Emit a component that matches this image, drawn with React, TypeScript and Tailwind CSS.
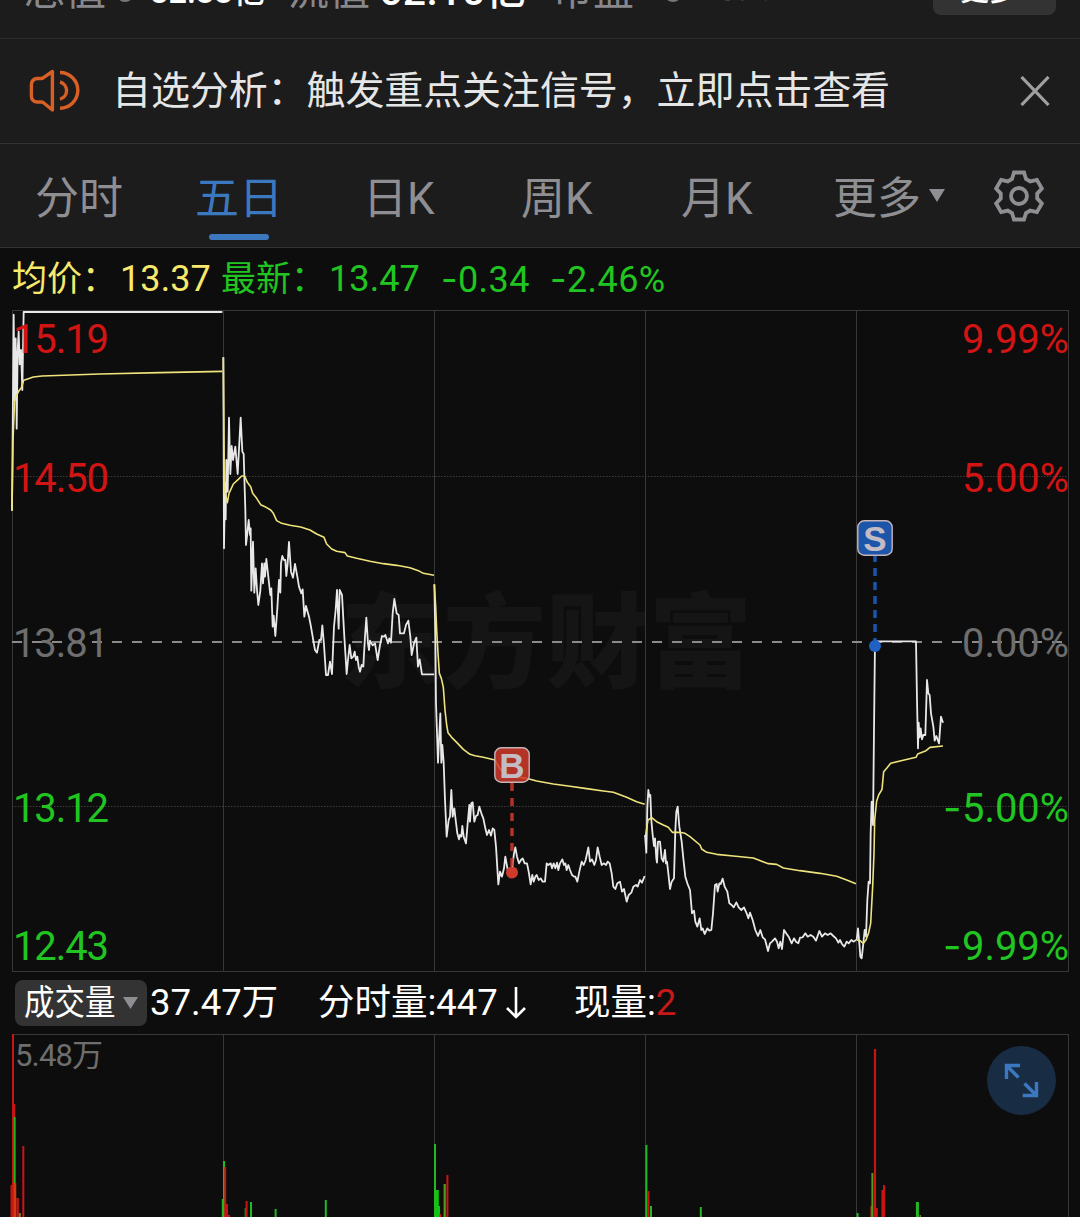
import clsx from 'clsx';

const tabs = [
  { label: '分时', width: 'w-[160px]' },
  { label: '五日', width: 'w-[168px]', active: true },
  { label: '日K', width: 'w-[158px]' },
  { label: '周K', width: 'w-[160px]' },
  { label: '月K', width: 'w-[152px]' },
];

const gridX = [12.5, 223.5, 434.5, 645.5, 856.5, 1068.5];

const axis = [
  { y: 353, price: '15.19', sign: '', pct: '9.99%', color: '#d21414' },
  { y: 492, price: '14.50', sign: '', pct: '5.00%', color: '#d21414' },
  { y: 657, price: '13.81', sign: '', pct: '0.00%', color: '#6e6e6e' },
  { y: 822, price: '13.12', sign: '-', pct: '5.00%', color: '#21c521' },
  { y: 960, price: '12.43', sign: '-', pct: '9.99%', color: '#21c521' },
];

// One entry per trading day, points are thirds of a pixel from the day's origin
const days = [
  {
    origin: 'translate(0 300) scale(0.33333)',
    price:
      '36,632 41,44 44,300 47,115 50,386 53,150 56,95 59,193 63,150 67,270 71,36 667,36',
    avg: '36,632 39,420 44,300 52,282 57,272 64,263 71,241 85,236 100,231 126,228 300,222 480,218 667,214',
  },
  {
    origin: 'translate(210 350) scale(0.33333)',
    price:
      '40,22 42,595 45,400 47,508 49,330 53,425 57,203 61,372 65,288 69,330 76,290 83,372 92,203 97,305 101,312 106,480 108,585 112,550 116,510 120,555 122,535 124,722 129,575 133,728 137,655 141,720 145,765 151,722 156,640 159,700 163,640 165,680 169,627 176,690 181,735 184,715 188,830 191,797 196,858 202,775 207,690 211,728 213,640 217,618 222,630 226,630 229,678 233,640 237,576 243,665 249,683 255,642 262,680 267,710 274,730 278,718 283,800 288,768 297,800 302,825 308,860 315,900 321,908 328,870 333,870 337,826 342,885 348,975 354,975 360,935 366,972 372,830 377,780 381,720 386,836 389,720 396,735 403,860 410,972 414,930 419,885 424,925 430,920 434,905 438,930 442,920 446,950 450,965 455,945 460,950 465,860 469,803 474,880 477,900 480,872 488,886 495,880 503,930 510,885 516,858 522,860 526,855 534,880 538,865 543,878 548,790 553,747 560,790 566,795 570,850 582,850 588,825 595,812 601,860 605,915 612,880 619,863 624,950 629,928 636,973 672,973',
    avg: '40,22 43,420 52,458 57,430 70,402 85,388 95,378 104,378 112,397 122,410 128,430 140,445 152,464 165,470 182,480 190,490 200,512 215,520 240,526 272,531 300,540 320,552 342,562 350,582 365,597 380,604 405,608 412,618 440,625 480,634 520,641 560,646 600,653 625,662 640,670 672,676',
  },
  {
    origin: 'translate(420 570) scale(0.33333)',
    price:
      '43,43 46,200 48,400 54,578 58,490 61,430 64,578 67,525 71,578 75,690 80,800 86,750 90,740 94,660 98,740 103,715 107,750 112,790 117,808 120,795 124,800 127,768 131,800 138,820 143,760 148,705 150,755 154,700 158,697 163,755 168,738 173,735 178,710 184,730 190,745 196,775 201,795 207,780 213,797 218,775 223,780 228,830 235,943 240,905 246,920 252,895 256,860 264,905 275,907 282,850 286,832 291,860 297,880 303,870 308,865 314,880 321,880 326,905 332,943 337,915 341,935 346,920 350,915 356,930 362,925 368,935 375,935 380,880 385,885 392,880 396,895 401,880 406,895 411,878 415,900 420,880 427,868 432,885 436,880 440,900 445,885 450,900 456,915 462,920 466,920 472,935 478,905 485,875 491,885 497,870 505,832 510,875 516,868 523,885 528,870 533,832 539,860 545,885 552,880 558,885 563,875 569,880 575,910 580,950 586,957 592,940 600,935 606,965 612,957 620,995 626,975 634,968 640,950 648,945 653,950 660,930 666,938 674,918',
    avg: '43,43 47,110 50,180 54,250 58,310 64,325 70,352 75,420 80,465 84,488 95,502 110,517 130,538 150,553 165,557 190,562 225,570 240,597 260,612 290,620 325,626 350,633 400,642 450,649 500,656 550,663 580,667 620,682 650,695 674,703',
  },
  {
    origin: 'translate(640 770) scale(0.33333)',
    price:
      '15,195 19,248 22,110 25,60 28,80 31,75 34,150 38,195 42,228 45,205 49,265 51,278 54,215 60,215 65,265 70,275 75,240 78,280 81,275 85,310 90,357 95,335 102,325 106,180 109,125 113,110 118,170 125,215 130,265 136,320 142,340 150,360 156,430 162,422 166,455 172,470 179,445 184,480 188,475 194,492 202,475 208,482 214,480 219,430 225,345 230,342 233,365 238,340 242,342 248,326 254,350 262,365 268,400 275,405 281,412 289,397 296,412 304,420 312,412 320,430 325,445 330,428 338,450 346,480 354,498 361,480 368,502 375,508 384,543 390,520 396,515 405,505 411,515 416,535 421,515 426,537 432,480 440,492 447,502 455,520 462,505 468,515 475,520 480,503 488,502 496,490 503,500 512,495 520,500 528,512 538,483 546,500 555,490 563,495 572,490 580,498 588,505 595,518 600,510 606,522 613,530 620,515 626,520 634,510 640,515 648,510',
    avg: '17,195 24,150 35,143 50,155 70,165 85,172 97,187 120,187 135,190 150,200 180,225 185,237 200,247 230,253 280,258 340,264 385,281 410,283 430,294 480,302 540,310 590,319 620,330 648,341',
  },
  {
    origin: 'translate(840 500) scale(0.33333)',
    price:
      '50,1320 54,1285 58,1330 61,1370 65,1375 70,1330 74,1290 78,1310 82,1200 86,1145 90,1150 92,1000 95,905 99,975 102,690 105,424 228,424 231,600 234,745 236,668 239,712 242,685 246,718 250,705 256,705 258,640 261,540 265,580 269,585 273,640 280,680 284,722 289,708 297,730 303,650 309,668',
    avg: '50,1320 60,1322 70,1330 78,1320 86,1298 92,1270 98,1160 102,1060 104,960 110,903 116,885 126,868 131,815 140,805 152,790 180,783 228,772 233,762 258,752 270,742 309,738',
  },
];

// [x, top, width, color]
const RED = '#c81414';
const GREEN = '#22b922';
const volumes: [number, number, number, string][] = [
  [13, 1034, 2, RED],
  [14.3, 1104, 1.5, RED],
  [14.7, 1117, 1.8, GREEN],
  [12, 1185, 3, RED],
  [15, 1183, 2.5, '#d23c0c'],
  [17.6, 1198, 2.5, RED],
  [19.8, 1213, 2, '#6a8a1c'],
  [23.3, 1146, 2, RED],
  [222.8, 1199, 2, GREEN],
  [224, 1161, 2, GREEN],
  [225.2, 1167, 2, RED],
  [227, 1204, 2, RED],
  [229, 1215, 2, RED],
  [245.2, 1208, 1, GREEN],
  [246.6, 1201, 2, RED],
  [251, 1202, 2, GREEN],
  [275.6, 1209, 2, GREEN],
  [325.8, 1200, 2, GREEN],
  [435, 1144, 2, GREEN],
  [437.3, 1190, 3, '#10c810'],
  [439, 1206, 2, '#10c810'],
  [440.3, 1214, 1.5, RED],
  [444.7, 1184, 2.2, '#4f9e1c'],
  [447.4, 1175, 2, RED],
  [646.4, 1145, 2, GREEN],
  [648.3, 1191, 2.4, RED],
  [651, 1206, 2, GREEN],
  [700.8, 1207, 2, GREEN],
  [857.6, 1213, 2, GREEN],
  [871.2, 1206, 1.6, '#a03c0c'],
  [872.4, 1173, 2, '#4f9e1c'],
  [875, 1049, 2.2, RED],
  [876.8, 1208, 2, RED],
  [882.4, 1190, 2, RED],
  [884, 1185, 2, RED],
  [917.4, 1202, 3, GREEN],
  [920.2, 1215, 1.5, '#6a8a1c'],
];

// Tail of the stats strip, scrolled mostly out of view
function TopStats() {
  return (
    <div className="h-[39px] shrink-0 overflow-hidden border-b border-[#2a2a2a] bg-[#1c1c1c]">
      <div className="-mt-[31px] flex h-[46px] items-end whitespace-nowrap leading-none text-[#88888c]">
        <span className="ml-[24px] mb-[3px] w-[92px] text-[41px]">总值</span>
        <span className="mb-[13px] mr-[16px] h-[18px] w-[18px] rounded-full bg-[#77777b]" />
        <span className="mb-[7px] w-[138px] text-[32.5px] font-medium text-white">82.33亿</span>
        <span className="mb-[3px] w-[91px] text-[41px]">流值</span>
        <span className="mb-[3px] w-[173px] text-[41px] font-medium tracking-[0.4px] text-white">62.10亿</span>
        <span className="mb-[3px] w-[112px] text-[41px]">市盈</span>
        <span className="mb-[13px] mr-[28px] h-[18px] w-[18px] rounded-full bg-[#77777b]" />
        <span className="mb-[12px] w-[223px] text-[29px] text-[#a0a0a4]">亏损</span>
        <span className="flex h-[46px] w-[123px] shrink-0 items-end rounded-lg bg-[#333] pb-[9px] pl-[27px] text-[29px] font-medium text-white">
          更多
        </span>
      </div>
    </div>
  );
}

function Notice() {
  return (
    <div className="flex h-[105px] shrink-0 items-center border-b border-[#333] bg-[#1c1c1c]">
      <svg className="ml-[28px]" width="54" height="46" viewBox="28 68 54 46" fill="none" stroke="#d85f25" strokeWidth="3.4">
        <path d="M52.4 71.5V110L43.5 102.8Q42.5 102 41 102H37Q31.4 101.5 31.4 96V85Q31.4 79.2 37 78.5H41Q42.5 78.5 43.5 77.7Z" strokeLinejoin="round" />
        <path d="M60 72.5A17.8 17.8 0 0 1 60 108.2M60 82A8.9 8.9 0 0 1 60 99.2" />
      </svg>
      <p className="ml-[30px] flex-1 whitespace-nowrap text-[39px] leading-none tracking-[-0.1px] text-[#e6e6e6]">
        自选分析：触发重点关注信号，立即点击查看
      </p>
      <svg className="mr-[30px]" width="30" height="30" viewBox="0 0 30 30" stroke="#a0a0a0" strokeWidth="3.2">
        <path d="M1.5 1L28.5 29M28.5 1L1.5 29" />
      </svg>
    </div>
  );
}

function Tabs() {
  return (
    <div className="flex h-[104px] shrink-0 items-center border-b border-[#333] bg-[#1c1c1c] pl-[35px] text-[44px] leading-none text-[#8e8e93]">
      {tabs.map((tab) => (
        <div key={tab.label} className={clsx('relative whitespace-nowrap pt-[6px]', tab.width, tab.active && 'text-[#3b78bf]')}>
          {tab.label}
          {tab.active && <span className="absolute -bottom-[19px] left-[14px] h-[6px] w-[60px] rounded-full bg-[#3b78bf]" />}
        </div>
      ))}
      <div className="flex w-[160px] items-center gap-[8px]">
        <span className="pt-[6px]">更多</span>
        <svg width="16" height="13" viewBox="0 0 16 13" fill="#8e8e93">
          <path d="M0 0H16L8 13Z" />
        </svg>
      </div>
      <svg width="52" height="52" viewBox="-26 -26 52 52" fill="none" stroke="#8e8e93" strokeWidth="3.8">
        <path d="M-5-23.5H5L7-17L11.2-14.6L17.85-16.1L22.85-7.4L18.2-2.4V2.4L22.85 7.4L17.85 16.1L11.2 14.6L7 17L5 23.5H-5L-7 17L-11.2 14.6L-17.85 16.1L-22.85 7.4L-18.2 2.4V-2.4L-22.85-7.4L-17.85-16.1L-11.2-14.6L-7-17Z" />
        <circle r="8" />
      </svg>
    </div>
  );
}

function PriceSummary() {
  return (
    <div className="flex h-[62px] shrink-0 items-center whitespace-nowrap pl-[12px] text-[36px] leading-none tracking-[0.4px] text-[#21c521]">
      <span className="w-[108px] text-[35px] tracking-normal text-[#f7e96b]">均价：</span>
      <span className="w-[101px] tracking-[0.1px] text-[#f7e96b]">13.37</span>
      <span className="w-[108px] text-[35px] tracking-normal">最新：</span>
      <span className="w-[112px] tracking-[0.1px]">13.47</span>
      <span className="w-[109px]">
        <span className="font-['Inter']">-</span>0.34
      </span>
      <span>
        <span className="font-['Inter']">-</span>2.46%
      </span>
    </div>
  );
}

function Marker({ x, y, end, letter, color, gap }: { x: number; y: number; end: number; letter: string; color: string; gap: number }) {
  return (
    <g>
      <path d={`M${x} ${y + 18}V${end}`} stroke={color} strokeWidth="3.5" strokeDasharray={`8 ${gap}`} strokeDashoffset={gap === 6 ? 2 : 0} opacity="0.85" />
      <circle cx={x} cy={end} r="6" fill={color} />
      <rect x={x - 17.2} y={y - 17.2} width="34.4" height="34.4" rx="6.5" fill={color} fillOpacity="0.86" stroke="#c4b4b8" strokeWidth="1.4" />
      <text x={x} y={y + 12.8} textAnchor="middle" fontFamily="Liberation Sans, Arial, sans-serif" fontWeight="700" fontSize="35" fill="#c4bcc4">
        {letter}
      </text>
    </g>
  );
}

function PriceChart() {
  return (
    <svg className="block shrink-0" width="1080" height="662" viewBox="0 310 1080 662" fill="none">
      <text x="340" y="680" textLength="412" fontSize="103" fontWeight="900" fill="#151515">
        东方财富
      </text>
      <path d="M12 310.5H1069M12 971.5H1069" stroke="#383838" />
      {gridX.map((x) => (
        <path key={x} d={`M${x} 310V972`} stroke="#383838" />
      ))}
      <path d="M12 476.5H1068M12 806.5H1068" stroke="#3c3c3c" strokeDasharray="1.5 1.5" />
      <path d="M12 642H1068" stroke="#8c8a8c" strokeWidth="1.8" strokeDasharray="10 10" />
      {days.map((day) => (
        <g key={day.origin} transform={day.origin} strokeLinejoin="round">
          <polyline points={day.price} stroke="#e8e8e8" strokeWidth="5.4" />
          <polyline points={day.avg} stroke="#efe37c" strokeWidth="4.8" />
        </g>
      ))}
      {axis.map((row) => (
        <g key={row.y} fill={row.color} fontSize="40">
          <text x="13" y={row.y} textLength="96">
            {row.price}
          </text>
          {row.sign && (
            <text x="943" y={row.y} fontFamily="Inter">
              {row.sign}
            </text>
          )}
          <text x="962" y={row.y} textLength="107" lengthAdjust="spacingAndGlyphs">
            {row.pct}
          </text>
        </g>
      ))}
      <Marker x={512} y={765} end={872.5} letter="B" color="#d03a2c" gap={7} />
      <Marker x={875} y={538} end={646} letter="S" color="#1f62c4" gap={6} />
    </svg>
  );
}

function VolumeSummary() {
  return (
    <div className="flex h-[62px] shrink-0 items-center whitespace-nowrap pl-[15px] text-[36.5px] leading-none text-white">
      <div className="flex h-[46px] w-[132px] items-center rounded-lg bg-[#333] pl-[9px]">
        <span className="w-[99px] origin-left scale-x-[0.87] text-[35px]">成交量</span>
        <svg width="15" height="12" viewBox="0 0 15 12" fill="#8e8e93">
          <path d="M0 0H15L7.5 12Z" />
        </svg>
      </div>
      <span className="ml-[3px] w-[168px]">37.47万</span>
      <span className="w-[188px]">分时量:447</span>
      <svg className="mr-[48px]" width="20" height="32" viewBox="0 0 20 32" fill="none" stroke="#fff" strokeWidth="2.6">
        <path d="M10 0V30M1 21L10 30L19 21" />
      </svg>
      <span>
        现量:<span className="text-[#c81818]">2</span>
      </span>
    </div>
  );
}

function VolumeChart() {
  return (
    <svg className="block shrink-0" width="1080" height="183" viewBox="0 1034 1080 183" fill="none">
      <path d="M12 1034.5H1069" stroke="#383838" />
      {gridX.map((x) => (
        <path key={x} d={`M${x} 1034V1217`} stroke="#383838" />
      ))}
      {volumes.map(([x, top, width, color]) => (
        <rect key={x} x={x - width / 2} y={top} width={width} height={1217 - top} fill={color} />
      ))}
      <text x="15" y="1066" fontSize="31" textLength="88" fill="#6e6e6e">
        5.48万
      </text>
      <circle cx="1021.5" cy="1080.5" r="34.5" fill="#182c44" />
      <path d="M1020 1065.5H1006.5V1079M1006.5 1065.5L1018.5 1077.5M1022.7 1095.5H1036.5V1082M1036.5 1095.5L1024.5 1083.5" stroke="#3b78bf" strokeWidth="3.4" />
    </svg>
  );
}

export default function App() {
  return (
    <div className="flex h-[1217px] w-[1080px] flex-col overflow-hidden bg-[#0d0d0d] font-['Roboto','Noto_Sans_CJK_SC',sans-serif]">
      <TopStats />
      <Notice />
      <Tabs />
      <PriceSummary />
      <PriceChart />
      <VolumeSummary />
      <VolumeChart />
    </div>
  );
}
